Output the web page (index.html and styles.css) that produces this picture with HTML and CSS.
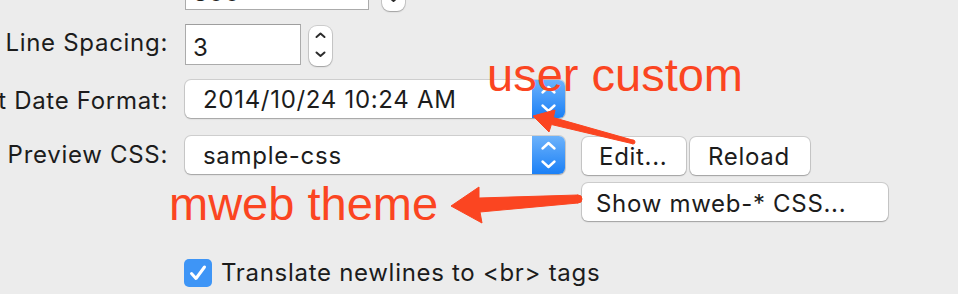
FILE: index.html
```html
<!DOCTYPE html>
<html>
<head>
<meta charset="utf-8">
<link rel="stylesheet" href="styles.css">
</head>
<body>
<div class="panel">
  <div class="row r0">
    <div class="label"><span>Max Width:</span></div>
    <div class="field wide">800</div>
    <div class="stepper s0">
      <svg width="23" height="40" viewBox="0 0 23 40"><path d="M7.5 11 L11.5 7.5 L15.5 11" /><path d="M7.5 26.5 L11.5 30 L15.5 26.5" /></svg>
    </div>
  </div>
  <div class="row r1">
    <div class="label"><span>Line Spacing:</span></div>
    <div class="field narrow">3</div>
    <div class="stepper s1">
      <svg width="23" height="40" viewBox="0 0 23 40"><path d="M7.5 11 L11.5 7.5 L15.5 11" /><path d="M7.5 26.5 L11.5 30 L15.5 26.5" /></svg>
    </div>
  </div>
  <div class="row r2">
    <div class="label"><span>Insert Date Format:</span></div>
    <div class="popup">
      <span class="popup-text">2014/10/24 10:24 AM</span>
      <span class="popup-arrows">
        <svg width="33" height="38" viewBox="0 0 33 38"><path d="M10.5 12.5 L16.5 7 L22.5 12.5" /><path d="M10.5 25.5 L16.5 31 L22.5 25.5" /></svg>
      </span>
    </div>
  </div>
  <div class="row r3">
    <div class="label"><span>Preview CSS:</span></div>
    <div class="popup">
      <span class="popup-text">sample-css</span>
      <span class="popup-arrows">
        <svg width="33" height="38" viewBox="0 0 33 38"><path d="M10.5 12.5 L16.5 7 L22.5 12.5" /><path d="M10.5 25.5 L16.5 31 L22.5 25.5" /></svg>
      </span>
    </div>
    <div class="btn edit">Edit...</div>
    <div class="btn reload">Reload</div>
  </div>
  <div class="row r4">
    <div class="btn show">Show mweb-* CSS...</div>
  </div>
  <div class="row check-row">
    <span class="checkbox">
      <svg width="28" height="28" viewBox="0 0 28 28"><path d="M7.5 14.5 L12 19.5 L20.5 8" /></svg>
    </span>
    <span class="check-label">Translate newlines to &lt;br&gt; tags</span>
  </div>
</div>

<div class="note note-user">user custom</div>
<div class="note note-theme">mweb theme</div>

<svg class="arrows" width="958" height="294" viewBox="0 0 958 294">
  <polygon points="533,116 555,110 553.4,117.6 633.5,140.3 632.5,143.7 551.4,124.5 549,132" />
  <circle cx="633" cy="142" r="2" />
  <polygon points="451,206 479,187 479,198 578,195 578,203 480,212 482,223" />
  <circle cx="578" cy="199" r="4" />
</svg>
</body>
</html>
```

FILE: styles.css
```css
html, body {
  margin: 0;
  padding: 0;
  background: #ececec;
  width: 958px;
  height: 294px;
  overflow: hidden;
}

body {
  position: relative;
  font-family: "Inter", "Liberation Sans", sans-serif;
  font-size: 24px;
  line-height: 29px;
  letter-spacing: 0.7px;
  color: #1c1c1c;
}

.panel {
  display: flex;
  flex-direction: column;
  margin-top: -31px;
}

.row {
  display: flex;
  align-items: flex-start;
}

.label {
  width: 168px;
  flex: none;
  margin-right: 17px;
  display: flex;
  justify-content: flex-end;
  padding-top: 4px;
  white-space: nowrap;
}

.r2 .label {
  padding-top: 6px;
}

.field {
  box-sizing: border-box;
  height: 41px;
  background: #fff;
  border: 1px solid #ababab;
  border-top-color: #9e9e9e;
  padding: 8px 0 0 7px;
}

.field.wide {
  width: 184px;
}

.field.narrow {
  width: 116px;
}

.stepper {
  box-sizing: border-box;
  width: 23px;
  height: 40px;
  margin-top: 2px;
  background: #fff;
  border-radius: 8px;
  box-shadow: 0 0 0 1px rgba(0, 0, 0, 0.13), 0 1px 1.5px rgba(0, 0, 0, 0.22);
}

.stepper svg path {
  fill: none;
  stroke: #2c2c2c;
  stroke-width: 2;
  stroke-linecap: round;
  stroke-linejoin: round;
}

.s0 {
  margin-left: 13px;
}

.s1 {
  margin-left: 8px;
}

.r1 {
  margin-top: 13px;
}

.r2 {
  margin-top: 14px;
}

.r3 {
  margin-top: 18px;
}

.r4 {
  margin-top: 8px;
  padding-left: 582px;
}

.popup {
  box-sizing: border-box;
  width: 380px;
  height: 38px;
  display: flex;
  background: #fff;
  border-radius: 6px;
  box-shadow: 0 0 0 1px rgba(0, 0, 0, 0.12), 0 1px 1.5px rgba(0, 0, 0, 0.22);
  overflow: hidden;
}

.popup-text {
  flex: 1;
  padding: 5px 0 0 18px;
  white-space: nowrap;
}

.popup-arrows {
  width: 33px;
  height: 38px;
  background: linear-gradient(#6cb2fb, #1b80f6);
}

.popup-arrows svg path {
  fill: none;
  stroke: #fff;
  stroke-width: 2.4;
  stroke-linecap: round;
  stroke-linejoin: round;
}

.btn {
  box-sizing: border-box;
  height: 38px;
  margin-top: 1px;
  background: #fff;
  border-radius: 6px;
  box-shadow: 0 0 0 1px rgba(0, 0, 0, 0.13), 0 1px 1.5px rgba(0, 0, 0, 0.22);
  padding-top: 5px;
  white-space: nowrap;
}

.btn.edit {
  width: 104px;
  margin-left: 17px;
  padding-left: 17px;
}

.btn.reload {
  width: 120px;
  margin-left: 4px;
  padding-left: 18px;
}

.btn.show {
  width: 306px;
  margin-top: 0;
  padding-left: 14px;
  padding-top: 6px;
}

.check-row {
  margin-top: 37px;
  margin-left: 184px;
  align-items: center;
}

.checkbox {
  width: 28px;
  height: 28px;
  border-radius: 5px;
  background: #3e95f6;
}

.checkbox svg path {
  fill: none;
  stroke: #fff;
  stroke-width: 3;
  stroke-linecap: round;
  stroke-linejoin: round;
}

.check-label {
  margin-left: 9px;
}

.note {
  position: absolute;
  font-family: "Liberation Sans", Arial, sans-serif;
  font-size: 47px;
  line-height: 47px;
  letter-spacing: 0;
  color: #fb4521;
  white-space: nowrap;
}

.note-user {
  left: 487px;
  top: 51px;
}

.note-theme {
  left: 169px;
  top: 180px;
}

.arrows {
  position: absolute;
  left: 0;
  top: 0;
  pointer-events: none;
}

.arrows polygon,
.arrows circle {
  fill: #fb4521;
  stroke: #fb4521;
  stroke-width: 1;
  stroke-linejoin: round;
}
```
